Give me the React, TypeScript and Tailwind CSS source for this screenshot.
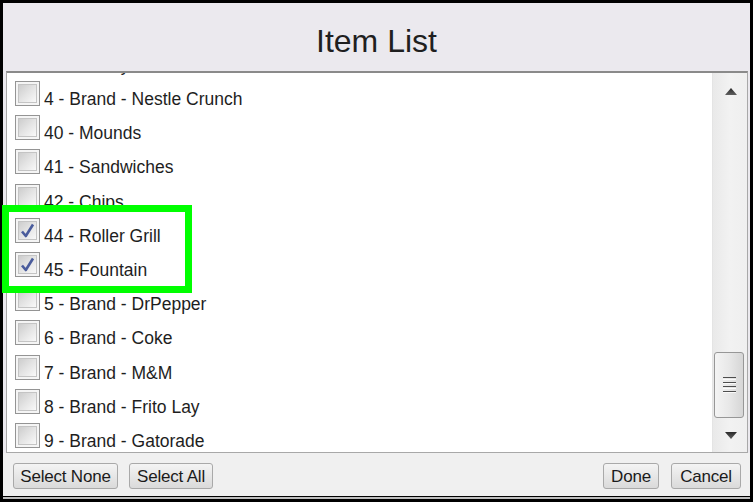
import React from "react";

type Item = { label: string; checked: boolean };

const items: Item[] = [
  { label: "39 - Candy", checked: false },
  { label: "4 - Brand - Nestle Crunch", checked: false },
  { label: "40 - Mounds", checked: false },
  { label: "41 - Sandwiches", checked: false },
  { label: "42 - Chips", checked: false },
  { label: "44 - Roller Grill", checked: true },
  { label: "45 - Fountain", checked: true },
  { label: "5 - Brand - DrPepper", checked: false },
  { label: "6 - Brand - Coke", checked: false },
  { label: "7 - Brand - M&M", checked: false },
  { label: "8 - Brand - Frito Lay", checked: false },
  { label: "9 - Brand - Gatorade", checked: false },
];

const font = { fontFamily: '"Liberation Sans", Arial, sans-serif' };

function CheckBox({ checked }: { checked: boolean }) {
  return (
    <div className="relative mt-[4px] h-[25px] w-[25px] shrink-0 border border-[#949494] bg-[#f5f5f5] p-[2px]">
      <div className="h-full w-full border border-[#c4c4c4] bg-gradient-to-br from-[#cdcdcd] via-[#e4e4e4] to-[#f9f9f9]" />
      {checked && (
        <svg className="absolute left-0 top-0" width="23" height="23" viewBox="0 0 23 23">
          <path d="M6 12.5 L9.8 17 L17 5.5" fill="none" stroke="#4a5c9c" strokeWidth="2.6" strokeLinejoin="round" />
        </svg>
      )}
    </div>
  );
}

function Row({ item }: { item: Item }) {
  return (
    <div className="flex h-[34.2px] shrink-0 items-start gap-[4px] pl-[8px]">
      <CheckBox checked={item.checked} />
      <span className="mt-[13px] whitespace-nowrap text-[17.5px] leading-[18px] text-[#1e1e1e]">{item.label}</span>
    </div>
  );
}

function Arrow({ up }: { up: boolean }) {
  return (
    <svg width="12" height="7" viewBox="0 0 12 7">
      <defs>
        <linearGradient id={up ? "au" : "ad"} x1="0" y1="0" x2="0" y2="1">
          <stop offset="0" stopColor="#2a2a2a" />
          <stop offset="1" stopColor="#606060" />
        </linearGradient>
      </defs>
      <polygon points={up ? "0,7 6,0 12,7" : "0,0 12,0 6,7"} fill={`url(#${up ? "au" : "ad"})`} />
    </svg>
  );
}

function ScrollBar() {
  return (
    <div className="flex w-[35px] shrink-0 flex-col border-l border-[#e4e4e4] bg-gradient-to-r from-[#e9e9e9] via-[#f2f2f2] to-[#efefef]">
      <div className="flex h-[36px] items-center justify-center pl-[2px]">
        <Arrow up />
      </div>
      <div className="flex flex-1 flex-col justify-end">
        <div className="ml-[1px] flex h-[66px] w-[30px] flex-col items-center justify-center gap-[2px] rounded-[3px] border border-[#979797] bg-gradient-to-r from-[#f4f4f4] via-[#e8e8e8] to-[#d6d6d6]">
          {[0, 1, 2, 3].map((i) => (
            <div key={i} className="h-[2.5px] w-[13px] border-t border-[#4e4e4e] border-b-[1.5px] border-b-[#fafafa]" />
          ))}
        </div>
      </div>
      <div className="flex h-[34px] items-center justify-center pl-[2px]">
        <Arrow up={false} />
      </div>
    </div>
  );
}

function Button({ label, width }: { label: string; width: string }) {
  return (
    <button
      className={`${width} flex h-[26px] items-center justify-center rounded-[3px] border border-[#a9a9a9] bg-gradient-to-b from-[#f4f4f4] to-[#dadada] text-[17px] leading-none tracking-[-0.2px] text-[#1b1b1b]`}
    >
      {label}
    </button>
  );
}

export default function App() {
  return (
    <div className="relative flex h-[502px] w-[753px] flex-col bg-black px-[3px] pb-[3px] pt-[3px]" style={font}>
      <div className="flex flex-1 flex-col">
        <div className="flex h-[68px] shrink-0 justify-center bg-[#ebe9ee] pt-[22px]">
          <h1 className="text-[32px] leading-[32px] text-[#1f1f1f]">Item List</h1>
        </div>
        <div className="flex h-[382px] shrink-0 bg-[#ebe9ee] pl-[3px] pr-[2px]">
          <div className="flex flex-1 border border-[#a8a8a8] border-t-2 border-t-[#8a8a8a] bg-white">
            <div className="flex-1 overflow-hidden">
              <div className="mt-[-30.2px] flex flex-col">
                {items.map((it) => (
                  <Row key={it.label} item={it} />
                ))}
              </div>
            </div>
            <ScrollBar />
          </div>
        </div>
        <div className="flex h-[43px] shrink-0 items-start justify-between bg-[#f0f0f0] pl-[10px] pr-[9px] pt-[10px]">
          <div className="flex gap-[11px]">
            <Button label="Select None" width="w-[105px]" />
            <Button label="Select All" width="w-[84px]" />
          </div>
          <div className="flex gap-[12px]">
            <Button label="Done" width="w-[56px]" />
            <Button label="Cancel" width="w-[70px]" />
          </div>
        </div>
        <div className="mt-[1px] h-[2px] shrink-0 bg-[#bdbdbd]" />
      </div>
      <div className="absolute left-[2px] top-[205px] h-[88px] w-[190px] border-[7px] border-[#00ff00]" />
    </div>
  );
}
